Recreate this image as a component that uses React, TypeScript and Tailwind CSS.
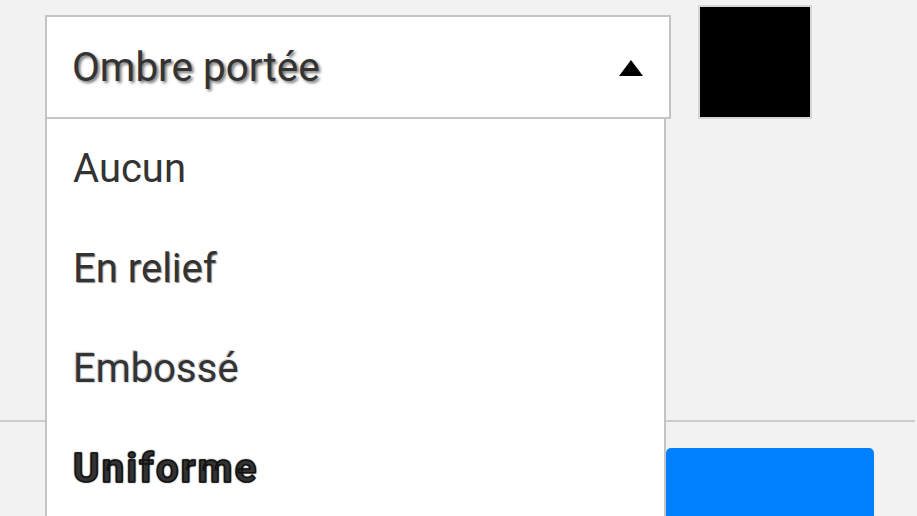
import React from "react";

const items: { label: string; cls: string }[] = [
  { label: "Aucun", cls: "" },
  { label: "En relief", cls: "[text-shadow:1px_1px_1px_rgba(0,0,0,0.45)]" },
  { label: "Embossé", cls: "[text-shadow:1px_1px_0_#dddddd,-1px_-1px_1px_rgba(60,60,60,0.3)]" },
  {
    label: "Uniforme",
    cls: "font-bold tracking-[2.3px] text-[#3a3a3a] [-webkit-text-stroke:1.5px_#111] [text-shadow:0_0_2px_#111,0_0_2px_#111,0_0_1px_#111]",
  },
];

export default function App() {
  return (
    <div className="h-[516px] w-[917px] overflow-hidden bg-[#f2f2f2] font-['Roboto',sans-serif]">
      <div className="flex pl-[45px]">
        <div className="relative mt-[15px] w-[626px]">
          <div className="flex h-[104px] items-center justify-between border-2 border-[#c4c4c4] bg-white pl-[25px] pr-[26px]">
            <span className="text-[40.5px] leading-[100px] text-[#333] [text-shadow:2px_2px_3px_rgba(0,0,0,0.55)]">
              Ombre portée
            </span>
            <svg width="24" height="16" viewBox="0 0 24 16" className="mt-[2px]">
              <polygon points="12,0 24,16 0,16" fill="#000" />
            </svg>
          </div>
          <div className="absolute left-0 top-full z-10 h-[420px] w-[621px] border-x-2 border-[#c4c4c4] bg-white">
            {items.map((it) => (
              <div key={it.label} className="flex h-[100px] items-center pl-[26px]">
                <span className={`text-[40px] leading-[100px] text-[#333] ${it.cls}`}>{it.label}</span>
              </div>
            ))}
          </div>
        </div>
        <div className="ml-[27px] mt-[5px] h-[114px] w-[114px] border-2 border-[#d6d6d6] bg-black" />
      </div>
      <div className="mr-[2px] mt-[301px] border-t-2 border-[#cccccc] pl-[666px] pt-[26px]">
        <div className="h-[80px] w-[208px] rounded-t-[5px] bg-[#0080ff]" />
      </div>
    </div>
  );
}
